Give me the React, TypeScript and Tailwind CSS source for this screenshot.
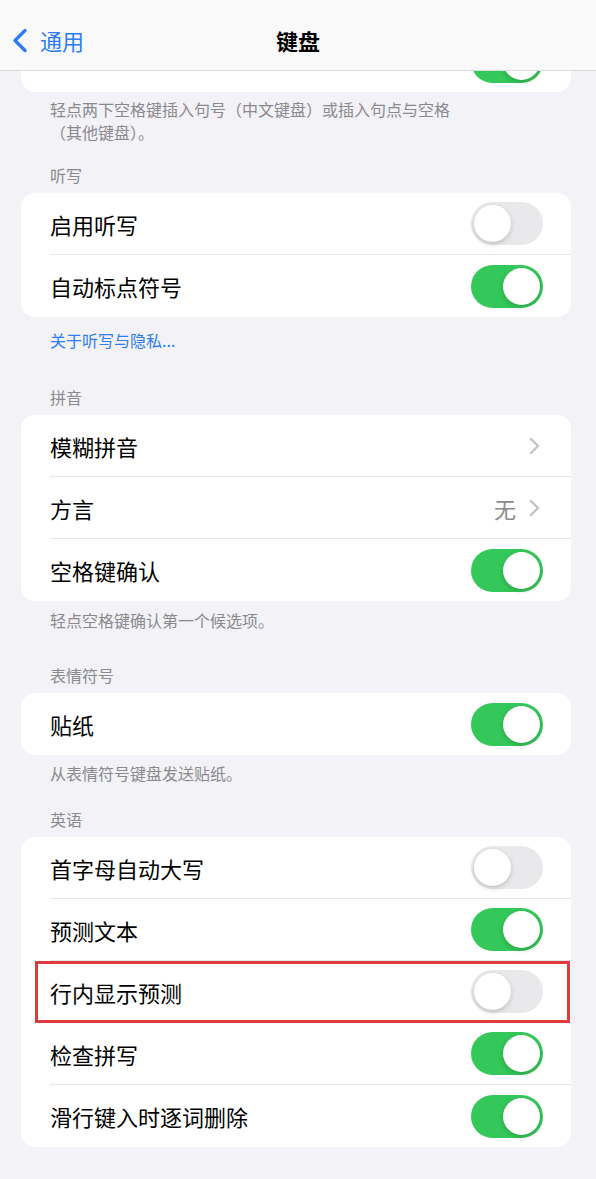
import React from 'react';

const font = { fontFamily: '"Noto Sans CJK SC", "Noto Sans", sans-serif' };

const Toggle = ({ on }: { on: boolean }) => (
  <div
    className={`relative h-[43px] w-[72px] shrink-0 rounded-full ${on ? 'bg-[#34c759]' : 'bg-[#e9e9eb]'}`}
  >
    <div
      className={`absolute top-[3px] h-[37px] w-[37px] rounded-full bg-white shadow-[0_2px_5px_rgba(0,0,0,0.18)] ${on ? 'left-[32px]' : 'left-[3px]'}`}
    />
  </div>
);

const Chevron = () => (
  <svg width="11" height="18" viewBox="0 0 11 18" fill="none" className="shrink-0">
    <path d="M2 2l7 7-7 7" stroke="#c4c4c7" strokeWidth="2.4" strokeLinecap="round" strokeLinejoin="round" />
  </svg>
);

type Row = { label: string; toggle?: boolean; value?: string; chevron?: boolean; highlight?: boolean };

const Card = ({ rows }: { rows: Row[] }) => (
  <div className="ml-[21px] mr-[25px] rounded-[14px] bg-white">
    {rows.map((r, i) => (
      <div key={i} className="relative h-[62px] pl-[29px]">
        <div
          className={`flex h-full items-center justify-between ${r.chevron ? 'pr-[31px]' : 'pr-[28px]'} ${i < rows.length - 1 ? 'border-b border-[#e6e6ea]' : ''}`}
        >
          <span className="text-[22px] leading-none text-black">{r.label}</span>
          {r.toggle !== undefined && <Toggle on={r.toggle} />}
          {r.chevron && (
            <div className="flex items-center gap-[13px]">
              {r.value && <span className="text-[22px] leading-none text-[#8a8a8e]">{r.value}</span>}
              <Chevron />
            </div>
          )}
        </div>
        {r.highlight && (
          <div className="pointer-events-none absolute left-[14px] right-[1px] top-0 bottom-0 border-[3px] border-[#e2393f]" />
        )}
      </div>
    ))}
  </div>
);

const SectionHeader = ({ children, mt }: { children: React.ReactNode; mt: string }) => (
  <div className={`${mt} mb-[8px] px-[50px] text-[16px] leading-[20px] text-[#8a8a8e]`}>{children}</div>
);

const Footer = ({ children, mt }: { children: React.ReactNode; mt: string }) => (
  <div className={`${mt} px-[50px] text-[16px] leading-[20px] text-[#8a8a8e]`}>{children}</div>
);

export default function App() {
  return (
    <div className="relative min-h-[1179px] w-full overflow-hidden bg-[#f2f2f7]" style={font}>
      {/* nav bar lies over the scrolled list */}
      <div className="absolute inset-x-0 top-0 z-10 h-[71px] border-b border-[#dcdcdf] bg-[#f9f9f9]">
        <div className="relative flex h-full items-center">
          <div className="flex items-center pl-[12px] pt-[10px]">
            <svg width="16" height="25" viewBox="0 0 16 25" fill="none">
              <path d="M13 2.5L3 12.5l10 10" stroke="#2f7cf6" strokeWidth="3.4" strokeLinecap="round" strokeLinejoin="round" />
            </svg>
            <span className="ml-[12px] text-[22px] leading-none text-[#2f7cf6]">通用</span>
          </div>
          <div className="pointer-events-none absolute inset-x-0 top-[5px] flex h-full items-center justify-center">
            <span className="text-[22px] font-bold leading-none text-black">键盘</span>
          </div>
        </div>
      </div>

      <div className="pt-[30px] pb-[40px]">
        {/* top row scrolled under the nav bar: only its toggle shows */}
        <Card rows={[{ label: '', toggle: true }]} />
        <div className="mt-[6px] px-[50px] text-[16px] leading-[23px] text-[#8a8a8e]">
          <div>轻点两下空格键插入句号（中文键盘）或插入句点与空格</div>
          <div>（其他键盘）。</div>
        </div>

        <SectionHeader mt="mt-[21px]">听写</SectionHeader>
        <Card
          rows={[
            { label: '启用听写', toggle: false },
            { label: '自动标点符号', toggle: true },
          ]}
        />
        <div className="mt-[13px] px-[50px] text-[16px] leading-[20px] text-[#2f7cf6]">关于听写与隐私...</div>

        <SectionHeader mt="mt-[37px]">拼音</SectionHeader>
        <Card
          rows={[
            { label: '模糊拼音', chevron: true },
            { label: '方言', value: '无', chevron: true },
            { label: '空格键确认', toggle: true },
          ]}
        />
        <Footer mt="mt-[9px]">轻点空格键确认第一个候选项。</Footer>

        <SectionHeader mt="mt-[35px]">表情符号</SectionHeader>
        <Card rows={[{ label: '贴纸', toggle: true }]} />
        <Footer mt="mt-[8px]">从表情符号键盘发送贴纸。</Footer>

        <SectionHeader mt="mt-[26px]">英语</SectionHeader>
        <Card
          rows={[
            { label: '首字母自动大写', toggle: false },
            { label: '预测文本', toggle: true },
            { label: '行内显示预测', toggle: false, highlight: true },
            { label: '检查拼写', toggle: true },
            { label: '滑行键入时逐词删除', toggle: true },
          ]}
        />
      </div>
    </div>
  );
}
